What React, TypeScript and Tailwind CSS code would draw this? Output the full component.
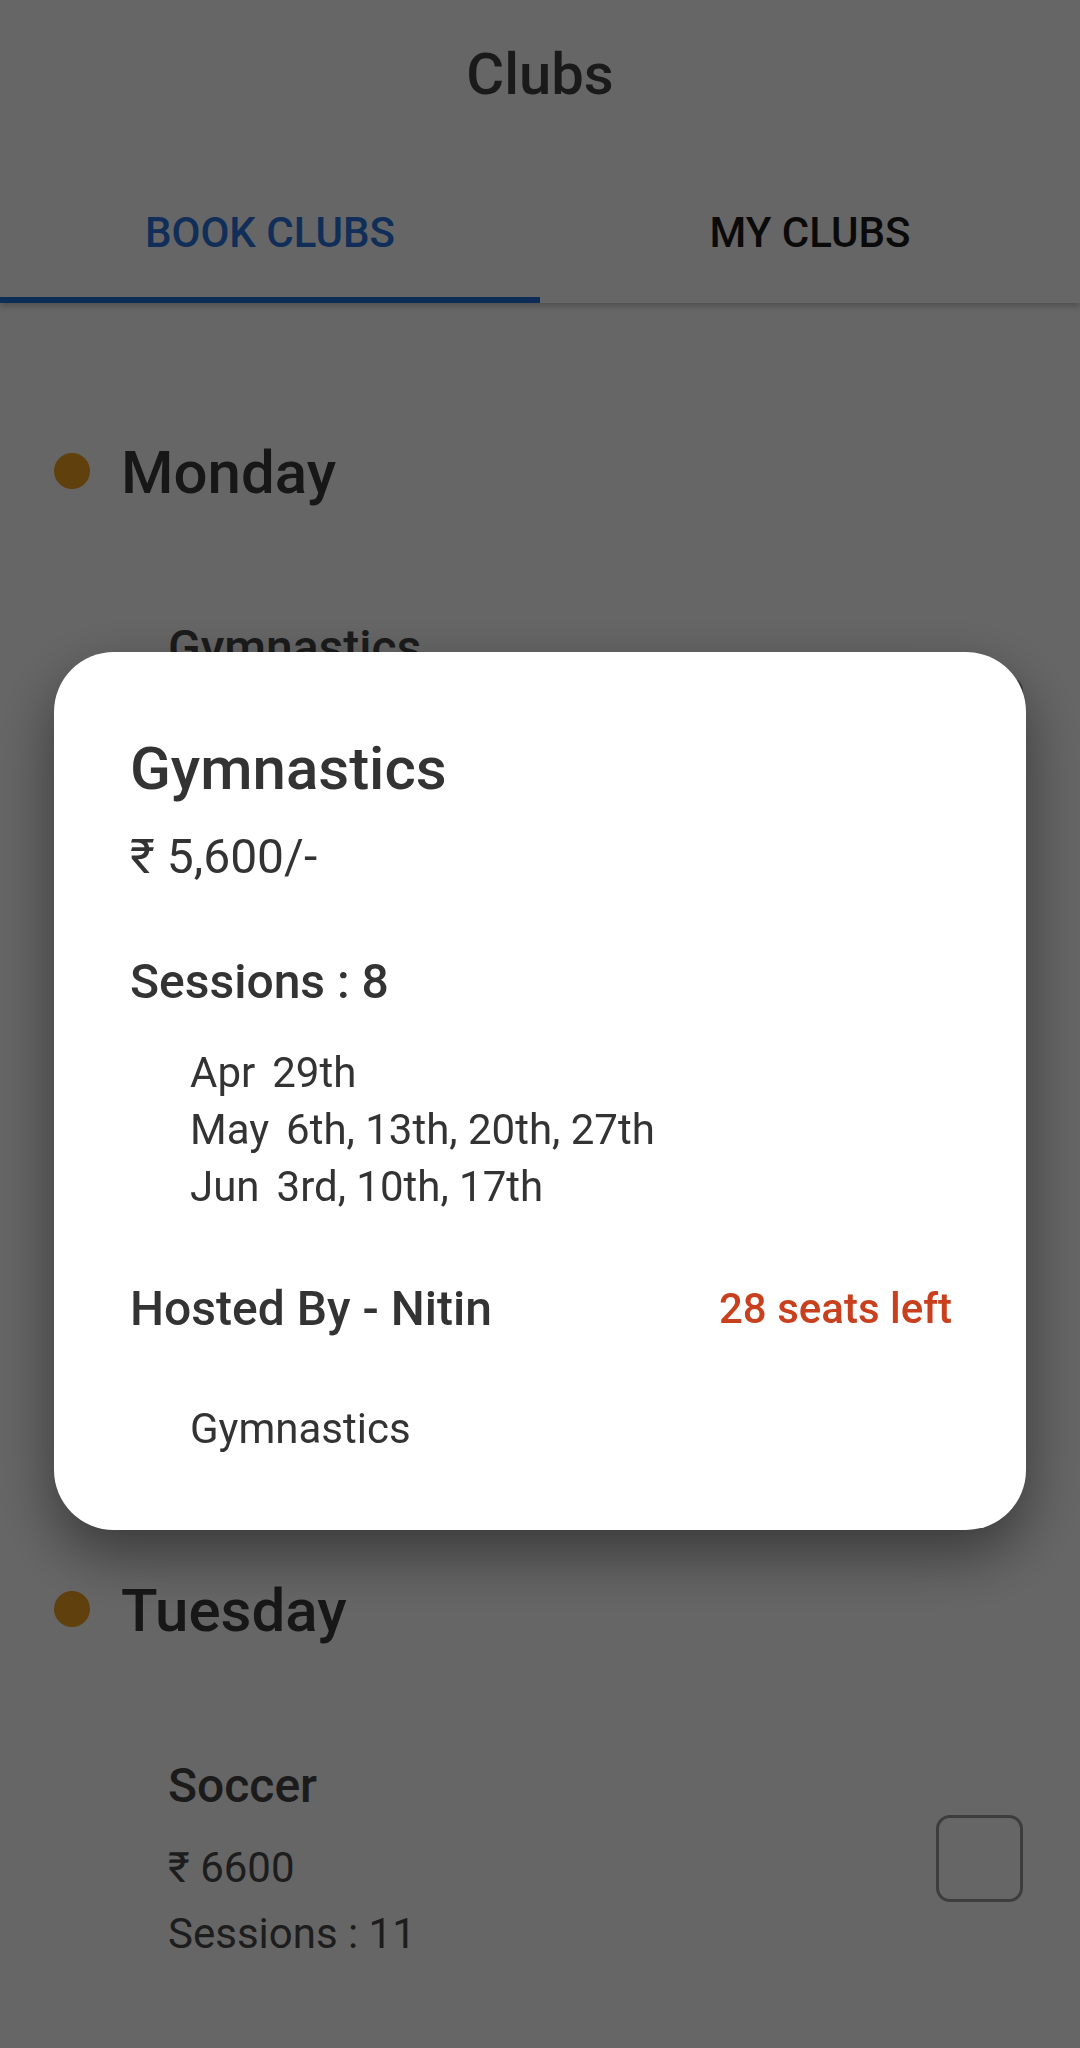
import React from "react";

type Club = { name: string; price: string; sessions: string };

function DayHeader({ day }: { day: string }) {
  return (
    <div className="flex h-[72px] items-center pl-[54px]">
      <span className="h-[36px] w-[36px] rounded-full bg-[#f0a020]" />
      <h2 className="ml-[31px] pt-[3px] text-[60px] font-medium leading-[72px] text-[#3a3a3a]">{day}</h2>
    </div>
  );
}

function ClubItem({ club }: { club: Club }) {
  return (
    <div className="mt-[112px] flex items-center pl-[168px] pr-[57px]">
      <div className="flex-1">
        <div className="text-[48px] font-medium leading-[58px] text-[#454545]">{club.name}</div>
        <div className="mt-[28px] text-[42px] leading-[50px] text-[#4a4a4a]">{club.price}</div>
        <div className="mt-[16px] text-[42px] leading-[50px] text-[#4a4a4a]">{club.sessions}</div>
      </div>
      <div className="h-[87px] w-[87px] rounded-[14px] border-[3px] border-[#999999]" />
    </div>
  );
}

const dates: [string, string][] = [
  ["Apr", "29th"],
  ["May", "6th, 13th, 20th, 27th"],
  ["Jun", "3rd, 10th, 17th"],
];

export default function App() {
  return (
    <div className="relative min-h-[2048px] w-[1080px] overflow-hidden bg-white font-[Roboto,sans-serif]">
      <header className="flex h-[159px] items-center justify-center pb-[10px] text-[58px] font-medium text-[#424242]">
        Clubs
      </header>
      <div className="relative z-10 flex h-[144px] bg-white shadow-[0_4px_6px_rgba(0,0,0,0.2)]">
        <div className="flex flex-1 flex-col">
          <div className="flex flex-1 items-center justify-center pt-[8px] text-[42px] font-medium text-[#2874dc]">
            BOOK CLUBS
          </div>
          <div className="h-[6px] bg-[#2472d8]" />
        </div>
        <div className="flex flex-1 flex-col">
          <div className="flex flex-1 items-center justify-center pt-[8px] text-[42px] font-medium text-[#1a1a1a]">
            MY CLUBS
          </div>
          <div className="h-[6px]" />
        </div>
      </div>

      <main className="pt-[132px]">
        <section>
          <DayHeader day="Monday" />
          <ClubItem club={{ name: "Gymnastics", price: "₹ 5600", sessions: "Sessions : 8" }} />
        </section>
        <section className="mt-[752px]">
          <DayHeader day="Tuesday" />
          <ClubItem club={{ name: "Soccer", price: "₹ 6600", sessions: "Sessions : 11" }} />
        </section>
      </main>

      <div className="fixed inset-0 z-20 bg-black/60 px-[54px] pt-[652px]">
        <div className="rounded-[60px] bg-white pb-[76px] pl-[76px] pr-[74px] pt-[82px] text-[#333333] shadow-[0_24px_60px_rgba(0,0,0,0.45)]">
          <div className="text-[60px] font-medium leading-[70px]">Gymnastics</div>
          <div className="mt-[25px] text-[48px] leading-[56px]">₹ 5,600/-</div>
          <div className="mt-[69px] text-[48px] font-medium leading-[56px]">Sessions : 8</div>
          <div className="mt-[34px] pl-[60px] text-[42px] leading-[57px]">
            {dates.map(([m, d]) => (
              <div key={m} className="flex gap-[17px]">
                <span>{m}</span>
                <span>{d}</span>
              </div>
            ))}
          </div>
          <div className="mt-[66px] flex items-center justify-between leading-[56px]">
            <span className="text-[48px] font-medium">Hosted By - Nitin</span>
            <span className="text-[42px] font-medium text-[#c8401e]">28 seats left</span>
          </div>
          <div className="mt-[67px] pl-[60px] text-[42px] leading-[50px]">Gymnastics</div>
        </div>
      </div>
    </div>
  );
}
